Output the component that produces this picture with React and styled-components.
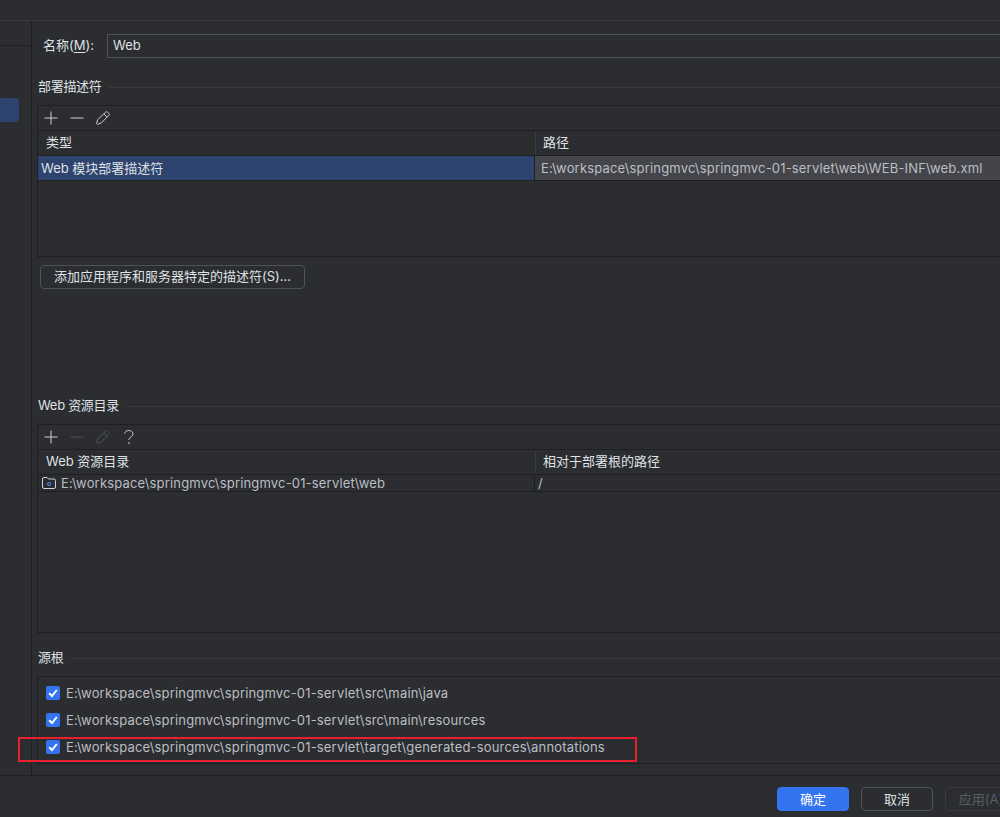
import React from 'react'
import styled, { createGlobalStyle } from 'styled-components'

const GlobalStyle = createGlobalStyle`
  html, body {
    margin: 0;
    padding: 0;
    background: #2b2d30;
  }
  * {
    box-sizing: border-box;
  }
`

const Page = styled.div`
  position: relative;
  width: 1000px;
  height: 817px;
  overflow: hidden;
  display: flex;
  flex-direction: column;
  background: #2b2d30;
  color: #dfe1e5;
  font-family: Inter, "Noto Sans CJK SC", sans-serif;
  font-size: 13px;
`
const TopBar = styled.div`
  height: 21px;
  flex: none;
  border-bottom: 1px solid #393b40;
`
const Body = styled.div`
  height: 754px;
  flex: none;
  display: flex;
`
const Sidebar = styled.aside`
  width: 32px;
  flex: none;
  border-right: 1px solid #1e1f22;
`
const SidebarSearch = styled.div`
  height: 25px;
  border-bottom: 1px solid #1e1f22;
`
const SidebarItem = styled.div`
  width: 19px;
  height: 24px;
  margin-top: 52px;
  background: #2e436e;
  border-radius: 0 4px 4px 0;
`
const Content = styled.main`
  flex: 1;
  min-width: 0;
  padding-left: 5px;
  display: flex;
  flex-direction: column;
`
const NameRow = styled.div`
  display: flex;
  align-items: center;
  height: 24px;
  margin-top: 13px;
  padding-left: 6px;
`
const NameLabel = styled.label`
  width: 64px;
  flex: none;
  padding-bottom: 3px;
  u {
    text-underline-offset: 2px;
  }
`
const NameInput = styled.div`
  width: 920px;
  flex: none;
  height: 24px;
  line-height: 20px;
  padding-left: 5px;
  border: 1px solid #4e5157;
`
const Heading = styled.div`
  display: flex;
  align-items: center;
  gap: 7px;
  height: 16px;
  margin-top: ${p => p.$top}px;
  margin-left: ${p => p.$indent || 1}px;
  white-space: nowrap;
  &::after {
    content: '';
    flex: 1;
    height: 1px;
    background: #393b40;
  }
`
const HeadingText = styled.span`
  margin-top: -3px;
  letter-spacing: -0.3px;
`
const Panel = styled.div`
  width: 980px;
  height: ${p => p.$height}px;
  flex: none;
  margin-top: 10px;
  border: 1px solid #1e1f22;
  border-right: 0;
`
const Toolbar = styled.div`
  display: flex;
  align-items: center;
  height: 25px;
  padding-left: 6px;
  gap: 12px;
  border-bottom: 1px solid #1e1f22;
`
const ToolIcon = styled.svg`
  width: 14px;
  height: 14px;
  flex: none;
  fill: none;
  stroke: ${p => (p.$off ? '#4e5157' : '#ced0d6')};
  stroke-width: 1;
`
const Row = styled.div`
  display: grid;
  grid-template-columns: 497px 1fr;
  height: ${p => p.$height || 25}px;
  border-bottom: 1px solid #1e1f22;
`
const HeadCell = styled.div`
  position: relative;
  padding-left: ${p => p.$pad}px;
  line-height: 22px;
  white-space: nowrap;
  &:last-child::before {
    content: '';
    position: absolute;
    left: 0;
    top: 1px;
    bottom: 1px;
    width: 1px;
    background: #393b40;
  }
`
const Cell = styled.div`
  display: flex;
  align-items: center;
  gap: 5px;
  padding-left: ${p => p.$pad}px;
  padding-bottom: ${p => (p.$tone === 'selected' ? 2 : 0)}px;
  letter-spacing: ${p => (p.$tone === 'selected' ? 0 : 0.175)}px;
  white-space: nowrap;
  overflow: hidden;
  color: ${p => (p.$tone === 'selected' ? '#dfe1e5' : '#bcbec4')};
  background: ${p => (p.$tone === 'selected' ? '#2e436e' : p.$tone === 'active' ? '#43454a' : 'transparent')};
  border-right: ${p => (p.$divide ? '1px solid #1e1f22' : '0')};
`
const WideButton = styled.button`
  width: 265px;
  height: 24px;
  flex: none;
  margin: 8px 0 0 3px;
  padding: 0 0 3px;
  color: #dfe1e5;
  font: inherit;
  background: transparent;
  border: 1px solid #4e5157;
  border-radius: 4px;
`
const RootList = styled.div`
  display: flex;
  flex-direction: column;
  gap: 1px;
  padding-top: 3px;
`
const RootRow = styled.div`
  display: flex;
  align-items: center;
  gap: 6px;
  height: 26px;
  padding-left: 8px;
  color: #bcbec4;
  letter-spacing: 0.175px;
  white-space: nowrap;
`
const Check = styled.svg`
  width: 14px;
  height: 14px;
  flex: none;
  border-radius: 2px;
  background: #3574f0;
  fill: none;
  stroke: #fff;
  stroke-width: 2;
`
const Footer = styled.footer`
  flex: 1;
  display: flex;
  gap: 12px;
  padding: 11px 0 0 777px;
  border-top: 1px solid #1e1f22;
`
const DialogButton = styled.button`
  width: 72px;
  height: 24px;
  flex: none;
  padding: 0 0 2px;
  font: inherit;
  white-space: nowrap;
  border-radius: 4px;
  color: ${p => (p.$primary ? '#fff' : p.disabled ? '#5a5d63' : '#dfe1e5')};
  background: ${p => (p.$primary ? '#3574f0' : 'transparent')};
  border: 1px solid ${p => (p.$primary ? '#3574f0' : p.disabled ? '#393b40' : '#4e5157')};
`
// red box drawn over the screenshot by hand
const Annotation = styled.div`
  position: absolute;
  left: 18px;
  top: 737px;
  width: 619px;
  height: 25px;
  border: 2px solid #e81f2c;
  pointer-events: none;
`

const Plus = ({ off }) => (
  <ToolIcon viewBox="0 0 14 14" $off={off}>
    <path d="M7 .5v13M.5 7h13" />
  </ToolIcon>
)
const Minus = ({ off }) => (
  <ToolIcon viewBox="0 0 14 14" $off={off}>
    <path d="M.5 7h13" />
  </ToolIcon>
)
const Pencil = ({ off }) => (
  <ToolIcon viewBox="0 0 14 14" $off={off}>
    <path d="M9.6 1.2a1.4 1.4 0 0 1 2 0l1.2 1.2a1.4 1.4 0 0 1 0 2l-7.6 7.7-3.9 1.2-.8-.8 1.2-3.9zM8 3l3 3" />
  </ToolIcon>
)
const Help = () => (
  <ToolIcon viewBox="0 0 14 14">
    <path d="M2.7 3.6C3 1.6 4.8.5 6.8.5c2.3 0 4.1 1.3 4.1 3.3 0 1.6-.9 2.4-2.1 3.2-1.2.8-1.8 1.5-1.8 3" />
    <path d="M7 12.2v1.6" strokeWidth="1.3" />
  </ToolIcon>
)
const Folder = () => (
  <svg width="14" height="12" viewBox="0 0 14 12" fill="none" style={{ flex: 'none' }}>
    <path d="M.5 2A1.5 1.5 0 0 1 2 .5h3l1.5 1.5H12A1.5 1.5 0 0 1 13.5 3.5V10A1.5 1.5 0 0 1 12 11.5H2A1.5 1.5 0 0 1 .5 10z" stroke="#ced0d6" />
    <circle cx="7" cy="7" r="1.5" stroke="#548af7" />
  </svg>
)
const Tick = () => (
  <Check viewBox="0 0 14 14">
    <path d="M3.2 7.2 6 10l4.8-6" />
  </Check>
)

const base = 'E:\\workspace\\springmvc\\springmvc-01-servlet'
const roots = ['\\src\\main\\java', '\\src\\main\\resources', '\\target\\generated-sources\\annotations']

const App = () => (
  <Page>
    <GlobalStyle />
    <TopBar />
    <Body>
      <Sidebar>
        <SidebarSearch />
        <SidebarItem />
      </Sidebar>
      <Content>
        <NameRow>
          <NameLabel>名称(<u>M</u>):</NameLabel>
          <NameInput>Web</NameInput>
        </NameRow>

        <Heading $top={21}><HeadingText>部署描述符</HeadingText></Heading>
        <Panel $height={152}>
          <Toolbar>
            <Plus />
            <Minus />
            <Pencil />
          </Toolbar>
          <Row>
            <HeadCell $pad={8}>类型</HeadCell>
            <HeadCell $pad={8}>路径</HeadCell>
          </Row>
          <Row>
            <Cell $pad={3} $tone="selected" $divide>Web 模块部署描述符</Cell>
            <Cell $pad={6} $tone="active">{base}\web\WEB-INF\web.xml</Cell>
          </Row>
        </Panel>
        <WideButton>添加应用程序和服务器特定的描述符(S)...</WideButton>

        <Heading $top={109} $indent={0}><HeadingText>Web 资源目录</HeadingText></Heading>
        <Panel $height={209}>
          <Toolbar>
            <Plus />
            <Minus off />
            <Pencil off />
            <Help />
          </Toolbar>
          <Row>
            <HeadCell $pad={8}>Web 资源目录</HeadCell>
            <HeadCell $pad={8}>相对于部署根的路径</HeadCell>
          </Row>
          <Row $height={17}>
            <Cell $pad={4} $divide>
              <Folder />
              {base}\web
            </Cell>
            <Cell $pad={3}>/</Cell>
          </Row>
        </Panel>

        <Heading $top={17}><HeadingText>源根</HeadingText></Heading>
        <Panel $height={88}>
          <RootList>
            {roots.map(root => (
              <RootRow key={root}>
                <Tick />
                {base}
                {root}
              </RootRow>
            ))}
          </RootList>
        </Panel>
      </Content>
    </Body>
    <Footer>
      <DialogButton $primary>确定</DialogButton>
      <DialogButton>取消</DialogButton>
      <DialogButton disabled>应用(A)</DialogButton>
    </Footer>
    <Annotation />
  </Page>
)

export default App
